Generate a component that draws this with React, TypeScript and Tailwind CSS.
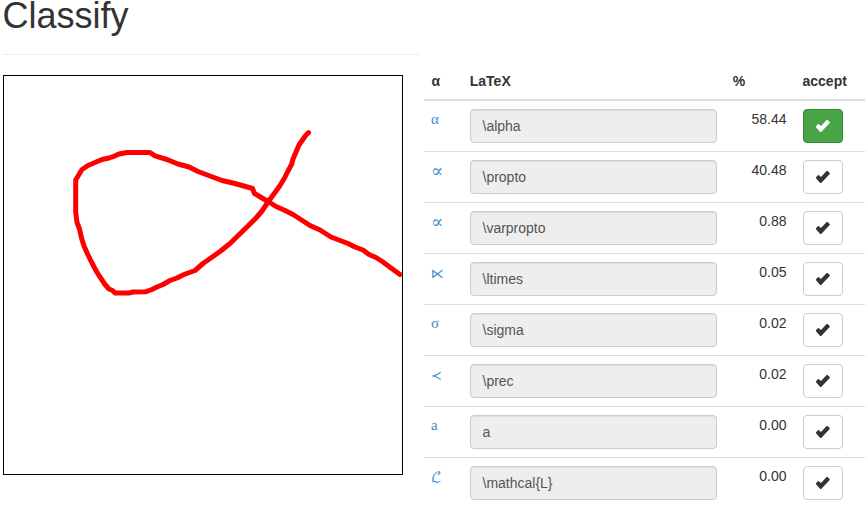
type Candidate = { symbol: string; latex: string; score: string; glyph: string };

const serif = "font-['Liberation_Serif','DejaVu_Serif','DejaVu_Sans',serif]";
const math = "font-['DejaVu_Math_TeX_Gyre','DejaVu_Serif',serif]";

const candidates: Candidate[] = [
  { symbol: "α", latex: "\\alpha", score: "58.44", glyph: `${serif} text-[15px] pt-2` },
  { symbol: "∝", latex: "\\propto", score: "40.48", glyph: `${serif} text-[18px] pt-[9px]` },
  { symbol: "∝", latex: "\\varpropto", score: "0.88", glyph: `${serif} text-[18px] pt-[9px]` },
  { symbol: "⋉", latex: "\\ltimes", score: "0.05", glyph: `${serif} text-[13px] pt-[10px]` },
  { symbol: "σ", latex: "\\sigma", score: "0.02", glyph: `${serif} text-[15px] pt-2` },
  { symbol: "≺", latex: "\\prec", score: "0.02", glyph: `${serif} text-[13px] pt-[10px]` },
  { symbol: "a", latex: "a", score: "0.00", glyph: `${serif} text-[15px] pt-2` },
  { symbol: "ℒ", latex: "\\mathcal{L}", score: "0.00", glyph: `${math} text-[14px] pt-[10px]` },
];

const columns = "grid grid-cols-[38px_263px_70px_1fr]";

function Check() {
  return (
    <svg width="16" height="14" viewBox="0 0 16 14" fill="currentColor" aria-hidden="true">
      <path d="M1 7.3 L2.9 5.3 Q3.4 4.9 3.9 5.3 L6 7.1 L11.6 1.1 Q12.1 .7 12.6 1.1 L14.7 3.1 Q15.1 3.6 14.7 4.1 L6.2 12.9 Q5.7 13.3 5.2 12.9 L1 8.3 Q0.6 7.8 1 7.3 Z" />
    </svg>
  );
}

function Drawing() {
  return (
    <svg width="398" height="398" viewBox="4 76 398 398" className="block">
      <path
        d="M308.5 132.7 L306 135 L299 145 L296 152 L293 159 L291.5 164.5 L288 171 L284 179 L279 187 L268 202 L262 211 L256 218 L250 224 L230 243.5 L220 251.5 L203 263.5 L195 270.5 L184 274.5 L177 278 L170 280.5 L163 284.5 L157 287 L152 289.5 L146 291.7 L133 292 L129 293 L115 293 L112.5 290.5 L109 289 L105 284.5 L101 278.5 L96.5 271.5 L92 263 L87.5 254 L84 246 L81.5 238 L79.5 229 L77 222.5 L75.7 212 L75.7 180 L82 169.5 L88 165.5 L95 162.5 L102 159.5 L109 158 L114 156.3 L119 154 L127 152.5 L150 152.5 L155 155.8 L167 159.5 L178 164 L189 167 L198 171.5 L210 176 L222 180.5 L235 183.5 L252.5 188.5 L254.5 193.5 L262 198 L269 202 L276 206.5 L284 210 L293 214.5 L310 225.5 L320 230 L331 237 L348 243.5 L355 247 L363 250 L369 254.5 L376 257.5 L383 262 L391 268 L400 274.5"
        fill="none"
        stroke="#ff0000"
        strokeWidth="5"
        strokeLinecap="round"
        strokeLinejoin="round"
      />
    </svg>
  );
}

export default function App() {
  return (
    <main className="flex h-[514px] w-[865px] bg-white pl-[3px] font-['Liberation_Sans',Arial,sans-serif] text-[14px] leading-5 text-[#333333]">
      <section className="w-[417px] shrink-0">
        <h1 className="h-[55px] border-b border-[#eeeeee] text-[36px] leading-8 font-normal -indent-[0.5px]">Classify</h1>
        <div className="mt-5 size-[400px] border border-black">
          <Drawing />
        </div>
      </section>

      <section className="ml-1 flex-1 pt-[63px]">
        <div className={`${columns} border-b-2 border-[#dddddd] font-bold`}>
          <div className="py-2 pl-[7.5px]">α</div>
          <div className="py-2 pl-[7.75px]">LaTeX</div>
          <div className="py-2 pl-[7.75px]">%</div>
          <div className="py-2 pl-[7.5px]">accept</div>
        </div>
        {candidates.map((c, i) => (
          <div key={c.latex} className={`${columns} ${i > 0 ? "border-t border-[#dddddd]" : ""}`}>
            <div className={`h-10 pl-[7px] text-[#428bca] ${c.glyph} leading-5`}>{c.symbol}</div>
            <div className="p-2">
              <div className="h-[34px] rounded-[4px] border border-[#cccccc] bg-[#eeeeee] py-1.5 pl-[11.5px] text-[#555555] shadow-[inset_0_1px_1px_rgba(0,0,0,0.075)]">
                {c.latex}
              </div>
            </div>
            <div className="py-2 pr-[8.5px] text-right">{c.score}</div>
            <div className="p-2">
              <button
                className={`flex h-[34px] w-10 items-center justify-center rounded-[4px] border ${
                  i === 0 ? "border-[#398439] bg-[#47a447] text-white" : "border-[#cccccc] bg-white text-[#333333]"
                }`}
              >
                <Check />
              </button>
            </div>
          </div>
        ))}
      </section>
    </main>
  );
}
